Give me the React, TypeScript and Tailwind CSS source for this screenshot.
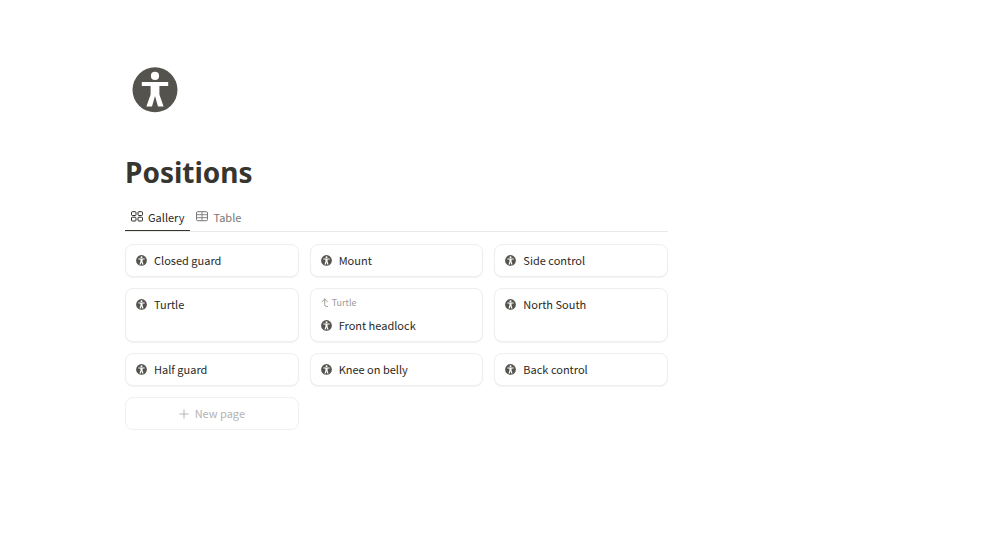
import * as React from "react";
import { clsx } from "clsx";

type ViewId = "gallery" | "table";

interface Position {
  id: string;
  title: string;
  /** Title of the parent page, shown above the card title */
  parent?: string;
}

const POSITIONS: Position[] = [
  { id: "closed-guard", title: "Closed guard" },
  { id: "mount", title: "Mount" },
  { id: "side-control", title: "Side control" },
  { id: "turtle", title: "Turtle" },
  { id: "front-headlock", title: "Front headlock", parent: "Turtle" },
  { id: "north-south", title: "North South" },
  { id: "half-guard", title: "Half guard" },
  { id: "knee-on-belly", title: "Knee on belly" },
  { id: "back-control", title: "Back control" },
];

interface IconProps {
  className?: string;
}

function BodyIcon({ className }: IconProps) {
  return (
    <svg className={className} viewBox="0 0 46 46" aria-hidden="true">
      <circle cx="23" cy="22.8" r="22.5" fill="#55534e" />
      <circle cx="23" cy="8.9" r="4.1" fill="#fff" />
      <path
        fill="#fff"
        d="M9.8 15h26.4v4H27.4v8.5l4.2 12.1h-5.6L23 29l-3 10.6h-5.6L18.6 27.5V19H9.8z"
      />
    </svg>
  );
}

function GalleryIcon({ className }: IconProps) {
  return (
    <svg
      className={className}
      viewBox="0 0 12 12"
      fill="none"
      stroke="currentColor"
      aria-hidden="true"
    >
      <rect x="0.5" y="0.7" width="4.5" height="3.8" rx="0.9" />
      <rect x="7" y="0.7" width="4.5" height="3.8" rx="0.9" />
      <rect x="0.5" y="6.2" width="4.5" height="3.8" rx="0.9" />
      <rect x="7" y="6.2" width="4.5" height="3.8" rx="0.9" />
    </svg>
  );
}

function TableIcon({ className }: IconProps) {
  return (
    <svg
      className={className}
      viewBox="0 0 12 12"
      fill="none"
      stroke="currentColor"
      aria-hidden="true"
    >
      <rect x="0.5" y="0.7" width="11" height="9" rx="1.3" />
      <path d="M0.5 3.7h11M0.5 6.7h11M6 0.7v9" strokeWidth="0.9" />
    </svg>
  );
}

function ParentIcon({ className }: IconProps) {
  return (
    <svg
      className={className}
      viewBox="0 0 8 10"
      fill="none"
      stroke="currentColor"
      strokeLinecap="round"
      strokeLinejoin="round"
      aria-hidden="true"
    >
      <path d="M1 3.7L3.7 1L6.4 3.7M3.7 1v5.5q0 2 2 2h0.8" />
    </svg>
  );
}

function PlusIcon({ className }: IconProps) {
  return (
    <svg className={className} viewBox="0 0 10 10" stroke="currentColor" aria-hidden="true">
      <path d="M5 0.5v9M0.5 5h9" />
    </svg>
  );
}

const VIEWS = [
  { id: "gallery" as ViewId, label: "Gallery", icon: GalleryIcon },
  { id: "table" as ViewId, label: "Table", icon: TableIcon },
];

function PositionCard({ position }: { position: Position }) {
  return (
    <a
      href={`#${position.id}`}
      className="block rounded-lg border border-[#eeeeed] bg-white px-2.5 py-2 shadow-[0_1px_1px_rgba(15,15,15,0.05)] hover:bg-[#f8f8f7]"
    >
      {position.parent && (
        <span className="mb-2.5 flex items-center gap-[3px] text-[9px] leading-[11px] text-[#9b9a97]">
          <ParentIcon className="h-2.5 w-2" />
          {position.parent}
        </span>
      )}
      <span className="flex items-center gap-[7px] text-[11px] leading-[15px] text-[#2b2924]">
        <BodyIcon className="size-[11px] shrink-0" />
        {position.title}
      </span>
    </a>
  );
}

export default function App() {
  const [view, setView] = React.useState<ViewId>("gallery");

  return (
    <main className="min-h-screen bg-white pr-6 pb-16 pl-[125px] font-['Noto_Sans_CJK_SC','Noto_Sans',sans-serif] text-[#37352f]">
      <div className="max-w-[543px] pt-[67px]">
        <BodyIcon className="mx-[7px] size-[46px]" />
        <h1 className="mt-10 font-['Noto_Sans',sans-serif] text-[28px] leading-[38px] font-bold">
          Positions
        </h1>

        {/* View tabs */}
        <div role="tablist" className="mt-3.5 flex border-b border-[#e9e9e7]">
          {VIEWS.map(({ id, label, icon: Icon }) => (
            <button
              key={id}
              type="button"
              role="tab"
              aria-selected={view === id}
              onClick={() => setView(id)}
              className={clsx(
                "flex items-center gap-[5px] border-b px-1.5 pt-1 pb-[5px] text-[11px] leading-4",
                view === id
                  ? "border-[#37352f] text-[#2b2924]"
                  : "border-transparent text-[#787774]"
              )}
            >
              <Icon className="size-3" />
              {label}
            </button>
          ))}
        </div>

        {/* Gallery */}
        <div className="mt-3 grid grid-cols-3 gap-[11px]">
          {POSITIONS.map((position) => (
            <PositionCard key={position.id} position={position} />
          ))}
          <button
            type="button"
            className="flex items-center justify-center gap-1.5 rounded-lg border border-[#f0f0ef] px-2.5 py-2 text-[11px] leading-[15px] text-[#b4b3b0]"
          >
            <PlusIcon className="size-2.5" />
            New page
          </button>
        </div>
      </div>
    </main>
  );
}
